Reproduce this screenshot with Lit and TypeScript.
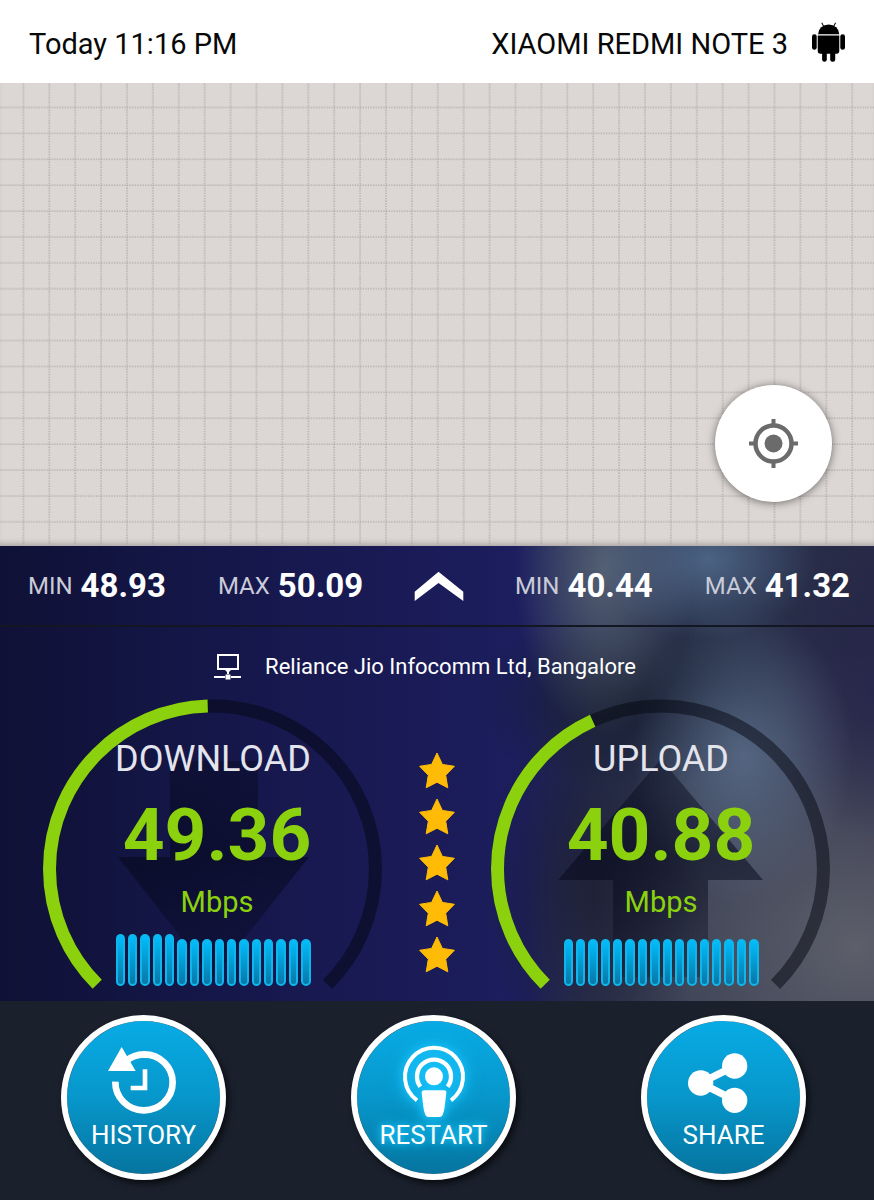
import { LitElement, html, css, svg } from "lit";
import { customElement, property } from "lit/decorators.js";

const ARC_RADIUS = 163;
const ARC_LENGTH = 2 * Math.PI * ARC_RADIUS;
const SWEEP = 0.75;

@customElement("speed-gauge")
class SpeedGauge extends LitElement {
  @property() label = "";
  @property({ type: Number }) value = 0;
  @property() direction: "down" | "up" = "down";
  @property({ type: Array }) samples: number[] = [];

  static styles = css`
    :host {
      display: grid;
      width: 340px;
    }
    .dial,
    .reading {
      grid-area: 1 / 1;
    }
    .dial {
      display: block;
      width: 340px;
      height: 290px;
    }
    .reading {
      display: flex;
      flex-direction: column;
      align-items: center;
      padding-top: 38px;
    }
    .label {
      margin: 0;
      font-size: 36px;
      line-height: 44px;
      font-weight: 400;
      color: #e3e4ec;
    }
    .figure {
      display: flex;
      flex-direction: column;
      align-items: center;
      color: #8cd10e;
    }
    .figure.down {
      padding-left: 8px;
    }
    .value {
      font-size: 73px;
      line-height: 84px;
      margin-top: 12px;
      font-weight: 700;
    }
    .unit {
      font-size: 29px;
      line-height: 36px;
      margin-top: 7px;
    }
    .bars {
      display: flex;
      align-items: flex-end;
      gap: 3px;
      width: 195px;
      height: 52px;
      margin-top: 14px;
    }
    .bar {
      flex: 1;
      box-sizing: border-box;
      border: 2px solid #0fb6ec;
      border-radius: 5px;
      background: linear-gradient(#00bdfc, #0a76a6);
    }
  `;

  render() {
    const track = ARC_LENGTH * SWEEP;
    const filled = track * (this.value / 100);
    const arrow =
      this.direction === "down"
        ? "M127 62H215V158H266L170 279 75 158H127Z"
        : "M170 60 272 181H217V278H122V181H67Z";
    return html`
      <svg class="dial" viewBox="0 0 340 290" aria-hidden="true">
        <defs>
          <linearGradient id="fade" x1="0" x2="0" y1="0" y2="1">
            <stop offset="0" stop-color="#05071a" stop-opacity=".38" />
            <stop offset=".45" stop-color="#05071a" stop-opacity=".55" />
            <stop offset="1" stop-color="#05071a" stop-opacity=".25" />
          </linearGradient>
        </defs>
        <path d=${arrow} fill="url(#fade)" />
        <g fill="none" stroke-width="13" transform="rotate(135 169.500 170)">
          <circle cx="169.500" cy="170" r=${ARC_RADIUS} stroke="#04060f" stroke-opacity=".5"
            stroke-dasharray="${track} ${ARC_LENGTH}" />
          <circle cx="169.500" cy="170" r=${ARC_RADIUS} stroke="#8cd10e"
            stroke-dasharray="${filled} ${ARC_LENGTH}" />
        </g>
      </svg>
      <div class="reading">
        <h2 class="label">${this.label}</h2>
        <div class="figure ${this.direction}">
          <span class="value">${this.value.toFixed(2)}</span>
          <span class="unit">Mbps</span>
        </div>
        <div class="bars" aria-hidden="true">
          ${this.samples.map((s) => html`<span class="bar" style="height:${s}%"></span>`)}
        </div>
      </div>
    `;
  }
}

const star = html`
  <svg class="star" viewBox="0 0 36 37" aria-hidden="true">
    <path fill="#ffbb05" stroke="#ffbb05" stroke-linejoin="round"
      d="M18 1 23.4 12.4 35.4 14.3 26.7 23.2 28.8 35.8 18 30.2 7.2 35.8 9.3 23.2.6 14.3 12.6 12.4Z" />
  </svg>
`;

const historyIcon = svg`
  <path d="M223 247A86 84 0 1 0 309 165Q278 166 256 184" fill="none" stroke="#fff" stroke-width="20" />
  <path d="M242 143 284 215H201Z" fill="#fff" />
  <path d="M312 210V266H269" fill="none" stroke="#fff" stroke-width="14" />
`;

const restartIcon = svg`
  <g fill="none" stroke="#fff" stroke-width="12">
    <path d="M258 303A87 87 0 1 1 360 303" />
    <path d="M268 262A51 51 0 1 1 350 262" stroke-width="13" />
  </g>
  <circle cx="309" cy="231" r="27" fill="#fff" />
  <path d="M280 273H340Q347 273 346 281L341 322Q337 353 326 353H292Q281 353 277 322L272 281Q271 273 280 273Z" fill="#fff" />
`;

const shareIcon = svg`
  <path d="M344 200 242 251 344 303" fill="none" stroke="#fff" stroke-width="22" />
  <g fill="#fff">
    <circle cx="344" cy="200" r="38" />
    <circle cx="242" cy="251" r="38" />
    <circle cx="344" cy="303" r="38" />
  </g>
`;

@customElement("app-root")
class AppRoot extends LitElement {
  static styles = css`
    :host {
      display: flex;
      flex-direction: column;
      min-height: 100vh;
      font-family: Roboto, "Liberation Sans", sans-serif;
      background: #1a212d;
    }
    button {
      font: inherit;
      border: 0;
      padding: 0;
      margin: 0;
      background: none;
      cursor: pointer;
    }
    svg {
      display: block;
    }
    .top {
      display: flex;
      align-items: center;
      justify-content: space-between;
      box-sizing: border-box;
      height: 83px;
      padding: 5px 29px 0;
      background: #fff;
      color: #080808;
      font-size: 29px;
      line-height: 36px;
    }
    .device {
      display: flex;
      align-items: center;
      gap: 24px;
    }
    .android {
      width: 33px;
      height: 40px;
      margin-bottom: 4px;
    }
    .map {
      flex: 1;
      display: grid;
      min-height: 463px;
      background: #dcd7d4;
      box-shadow: inset 0 -6px 6px -4px #00000040;
    }
    .grid,
    .locate {
      grid-area: 1 / 1;
    }
    .grid {
      width: 100%;
      height: 100%;
    }
    .locate {
      display: grid;
      place-items: center;
      place-self: end;
      width: 117px;
      height: 117px;
      margin: 0 42px 44px 0;
      border-radius: 50%;
      background: #fff;
      box-shadow: 0 1px 8px #00000080;
    }
    .panel {
      background:
        radial-gradient(110px 80px at 81% 3%, #6080a6a0, #6080a600),
        radial-gradient(90px 170px at 69% 5%, #627080c0, #62708000),
        radial-gradient(110px 150px at 85% 46%, #5e7290c0, #5e729000),
        radial-gradient(160px 90px at 72% 34%, #161d2ed0, #161d2e00),
        radial-gradient(110px 190px at 68% 76%, #1c1f33e0, #1c1f3300),
        radial-gradient(100px 150px at 100% 32%, #26264be0, #26264b00),
        radial-gradient(330px 300px at 98% 88%, #64666fe0, #64666f00),
        linear-gradient(to right, #0f1136 0, #15174a 25%, #1a1b56 46%, #1c1e5e 60%, #242a4c 68%, #29324a 80%, #272946 100%);
    }
    .stats {
      display: flex;
      align-items: center;
      justify-content: space-between;
      box-sizing: border-box;
      height: 81px;
      padding: 1px 24px 0 28px;
      border-bottom: 2px solid #121722;
      color: #fff;
    }
    .pair {
      display: flex;
      gap: 52px;
      margin: 0;
    }
    .stat {
      display: flex;
      align-items: center;
      gap: 8px;
    }
    .stat dt {
      font-size: 24px;
      line-height: 32px;
      color: #c9cbd8;
    }
    .stat dd {
      margin: 0;
      font-size: 33px;
      line-height: 40px;
      font-weight: 700;
    }
    .provider {
      display: flex;
      align-items: center;
      justify-content: center;
      gap: 24px;
      margin: 0;
      padding: 24px 24px 16px 0;
      font-size: 22px;
      line-height: 32px;
      color: #fff;
    }
    .gauges {
      display: grid;
      grid-template-columns: 1fr 36px 1fr;
      justify-items: center;
      padding: 0 7px 12px;
    }
    .stars {
      display: flex;
      flex-direction: column;
      gap: 9px;
      padding-top: 53px;
    }
    .star {
      width: 36px;
      height: 37px;
    }
    .actions {
      display: flex;
      justify-content: space-between;
      padding: 14px 68px 20px 61px;
      background: #1a212d;
    }
    .action {
      display: flex;
      flex-direction: column;
      align-items: center;
      box-sizing: border-box;
      width: 165px;
      height: 165px;
      padding-top: 20px;
      border: 6px solid #fff;
      border-radius: 50%;
      background: linear-gradient(#08abe5, #0797cb 50%, #06749f) padding-box;
      box-shadow: 3px 4px 6px #000000a0;
      color: #fff;
      font-size: 26px;
      line-height: 32px;
    }
    .icon {
      width: 76px;
      height: 76px;
      overflow: visible;
      margin-bottom: 2px;
    }
    .glow {
      text-shadow: 0 0 6px #19c9ff, 0 0 14px #19c9ff;
    }
    .glow .icon {
      filter: drop-shadow(0 0 4px #19c9ff) drop-shadow(0 0 8px #14bdf5);
    }
  `;

  private stat(name: string, value: string) {
    return html`<div class="stat"><dt>${name}</dt><dd>${value}</dd></div>`;
  }

  private action(label: string, icon: unknown, viewBox: string, glow = false) {
    return html`
      <button class="action ${glow ? "glow" : ""}" type="button">
        <svg class="icon" viewBox=${viewBox} aria-hidden="true">${icon}</svg>
        <span>${label}</span>
      </button>
    `;
  }

  render() {
    const down = Array.from({ length: 16 }, (_, i) => (i < 5 ? 100 : 90));
    const up = Array.from({ length: 16 }, () => 90);
    return html`
      <header class="top">
        <time>Today 11:16 PM</time>
        <div class="device">
          <span>XIAOMI REDMI NOTE 3</span>
          <svg class="android" viewBox="1027 65 98 118" role="img" aria-label="Android">
            <path d="M1045 101A31.500 29 0 0 1 1108 101Z" />
            <path d="M1044 105H1108V151Q1108 159 1100 159H1052Q1044 159 1044 151Z" />
            <rect x="1027" y="101" width="14" height="46" rx="7" />
            <rect x="1111" y="101" width="14" height="46" rx="7" />
            <rect x="1057" y="145" width="14" height="38" rx="7" />
            <rect x="1081" y="145" width="15" height="38" rx="7" />
            <path d="M1063 80 1056 67M1090 80 1097 67" stroke="#000" stroke-width="3" />
          </svg>
        </div>
      </header>

      <section class="map" aria-label="Map">
        <svg class="grid" aria-hidden="true">
          <defs>
            <pattern id="cells" x="10.400" y="11.400" width="25.900" height="25.900" patternUnits="userSpaceOnUse">
              <path d="M13 0V25.900M0 13H25.900" stroke="#aba6a3" stroke-width="1.300" stroke-dasharray="1.300 1.290" />
            </pattern>
          </defs>
          <rect width="100%" height="100%" fill="url(#cells)" />
        </svg>
        <button class="locate" type="button" aria-label="My location">
          <svg width="50" height="50" viewBox="0 0 50 50" fill="none" stroke="#6b6b6b" stroke-width="4">
            <circle cx="24.500" cy="24.500" r="18" stroke-width="4.500" />
            <path d="M24.500 0V6M24.500 43V49M0 24.500H6M43 24.500H49" />
            <circle cx="24.500" cy="24.500" r="9" fill="#6b6b6b" stroke="none" />
          </svg>
        </button>
      </section>

      <section class="panel">
        <div class="stats">
          <dl class="pair">${this.stat("MIN", "48.93")}${this.stat("MAX", "50.09")}</dl>
          <button type="button" aria-label="Show details">
            <svg width="50" height="30" viewBox="0 0 50 30">
              <path d="M.7 20.700 24.500.7 49.300 20.700V30L24.500 12 .7 30Z" fill="#fff" />
            </svg>
          </button>
          <dl class="pair">${this.stat("MIN", "40.44")}${this.stat("MAX", "41.32")}</dl>
        </div>
        <p class="provider">
          <svg width="27" height="28" viewBox="0 0 27 28" fill="none" stroke="#fff" stroke-width="2" aria-hidden="true">
            <path d="M4 2H24V16H4ZM14 16V21M0 24H11M17 24H27" />
            <rect x="11.500" y="21.500" width="5" height="5" fill="#fff" stroke="none" />
            <path d="M11 17H17L14 20Z" fill="#fff" stroke="none" />
          </svg>
          <span>Reliance Jio Infocomm Ltd, Bangalore</span>
        </p>
        <div class="gauges">
          <speed-gauge label="DOWNLOAD" direction="down" .value=${49.36} .samples=${down}></speed-gauge>
          <div class="stars" role="img" aria-label="5 stars">${[1, 2, 3, 4, 5].map(() => star)}</div>
          <speed-gauge label="UPLOAD" direction="up" .value=${40.88} .samples=${up}></speed-gauge>
        </div>
      </section>

      <nav class="actions" aria-label="Actions">
        ${this.action("HISTORY", historyIcon, "195 125 228 228")}
        ${this.action("RESTART", restartIcon, "195 125 228 228", true)}
        ${this.action("SHARE", shareIcon, "198 125 228 228")}
      </nav>
    `;
  }
}
